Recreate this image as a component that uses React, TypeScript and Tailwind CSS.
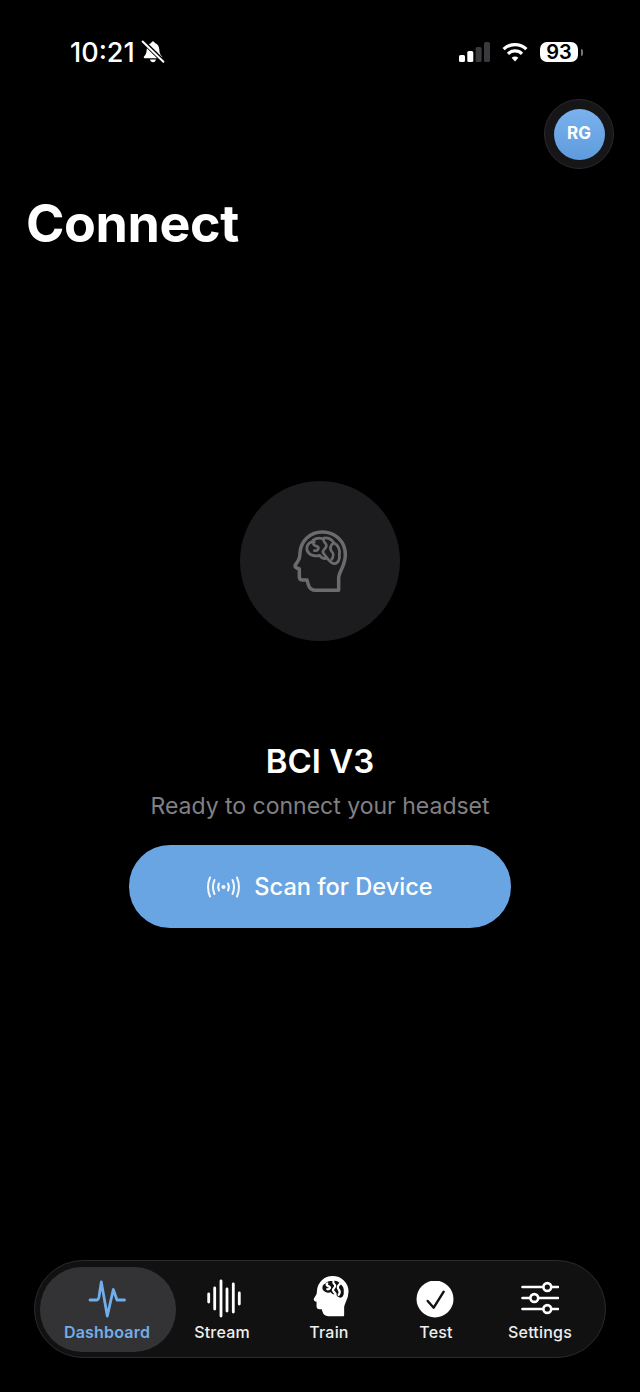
import React from "react";

const headPath =
  "M161 205 L161 168 C161 150 181 132 181 98 C181 58 150 30 112 30 C76 30 48 56 45 92 C44 104 45 108 40 115 L31 129 C29 133 31 137 35 138 L43 141 L43 164 C43 170 47 174 53 174 L66 174 L70 188 C73 198 82 205 92 205 Z";
const brainPath =
  "M66 85 C64 72 70 62 80 60 C86 50 100 46 112 50 C124 44 140 50 146 62 C158 68 166 82 163 98 C165 110 160 124 148 125 C138 124 132 116 126 108 C118 112 108 108 104 100 C92 104 74 102 66 85 Z";
const brainLines = [
  "M88 60 C80 66 90 72 98 74 C104 78 98 88 88 86",
  "M116 52 C112 62 126 62 124 72 C122 82 112 82 114 92 L126 108",
  "M146 62 C136 70 134 80 140 88 C146 94 146 104 140 112",
];

const HeadOutline = () => (
  <svg viewBox="0 0 210 234" className="h-[78px] w-[70px]" fill="none" stroke="#6b6b6d" strokeWidth="10.5" strokeLinejoin="round" strokeLinecap="round">
    <path d={headPath} />
    <path d={brainPath} strokeWidth="8.5" />
    {brainLines.map((d) => (
      <path key={d} d={d} strokeWidth="8" />
    ))}
  </svg>
);

const HeadFilled = () => (
  <svg viewBox="0 0 210 234" className="-mb-[3px] ml-[3px] h-[52px] w-[46px]" strokeLinejoin="round" strokeLinecap="round">
    <path d={headPath} fill="#fff" stroke="#fff" strokeWidth="8" />
    <path d={brainPath} fill="#111" />
    {brainLines.map((d) => (
      <path key={d} d={d} fill="none" stroke="#fff" strokeWidth="10" />
    ))}
  </svg>
);

const Pulse = () => (
  <svg width="38" height="38" viewBox="0 0 38 38" fill="none" stroke="#71aeea" strokeWidth="2.8" strokeLinejoin="round" strokeLinecap="round" className="overflow-visible">
    <path d="M2 19 H9 C10 19 10.5 18 11 16 L13.3 1 L19.3 35 L25.3 8.5 L29 19 H36.5" />
  </svg>
);

const Wave = () => (
  <svg width="38" height="38" viewBox="0 0 38 38" fill="none" stroke="#fff" strokeWidth="2.8" strokeLinecap="round" className="overflow-visible">
    <path d="M5.7 13 V21 M11.7 7 V28 M18 0 V35 M24 8 V30 M30.3 3 V31 M36.3 12 V23" />
  </svg>
);

const CheckCircle = () => (
  <svg width="38" height="38" viewBox="0 0 38 38" fill="none" className="-translate-x-[1px]">
    <circle cx="19" cy="18" r="18.5" fill="#fff" />
    <path d="M11.7 20 L17.7 26.7 L27.7 10.7" stroke="#111" strokeWidth="2.4" strokeLinecap="round" strokeLinejoin="round" />
  </svg>
);

const Sliders = () => (
  <svg width="38" height="38" viewBox="0 0 38 38" fill="none" stroke="#fff" strokeWidth="2.6" strokeLinecap="round">
    <path d="M1.5 6 H22 M30.5 6 H37 M1.5 17 H9 M17.5 17 H37 M1.5 28 H22 M30.5 28 H37" />
    <circle cx="26.3" cy="6" r="3.9" />
    <circle cx="13.3" cy="17" r="3.9" />
    <circle cx="26.3" cy="28" r="3.9" />
  </svg>
);

const Broadcast = () => (
  <svg width="33" height="24" viewBox="0 0 33 24" fill="none" stroke="#fff" strokeWidth="2" strokeLinecap="round" opacity="0.92">
    <circle cx="16.5" cy="12" r="2.1" fill="#fff" stroke="none" />
    <path d="M12 8.5 C11 10.5 11 13.5 12 15.5 M21 8.5 C22 10.5 22 13.5 21 15.5" />
    <path d="M7.5 5 C5.5 9.5 5.5 14.5 7.5 19 M25.5 5 C27.5 9.5 27.5 14.5 25.5 19" />
    <path d="M3 2.5 C0.5 8.5 0.5 15.5 3 21.5 M30 2.5 C32.5 8.5 32.5 15.5 30 21.5" />
  </svg>
);

const BellOff = () => (
  <svg width="24" height="24" viewBox="0 0 24 24" fill="#fff">
    <path d="M12 1.5 C13 1.5 13.7 2.2 13.8 3.1 C16.8 4 18.2 6.6 18.3 9.8 C18.4 13 19.4 15 21 16.6 C21.6 17.3 21.2 18.3 20.3 18.3 H3.7 C2.8 18.3 2.4 17.3 3 16.6 C4.6 15 5.6 13 5.7 9.8 C5.8 6.6 7.2 4 10.2 3.1 C10.3 2.2 11 1.5 12 1.5 Z" />
    <path d="M9 19.4 H15 C14.7 21 13.5 22.2 12 22.2 C10.5 22.2 9.3 21 9 19.4 Z" />
    <path d="M1 0.5 L23 22" stroke="#000" strokeWidth="4.4" fill="none" />
    <path d="M1.6 1.5 L22.4 21.8" stroke="#fff" strokeWidth="2" strokeLinecap="round" fill="none" />
  </svg>
);

const Signal = () => (
  <svg width="31" height="20" viewBox="0 0 31 20">
    <rect x="0" y="13" width="6" height="7" rx="1.6" fill="#fff" />
    <rect x="8.3" y="9" width="6" height="11" rx="1.6" fill="#fff" />
    <rect x="16.6" y="5" width="6" height="15" rx="1.6" fill="#3a3a3c" />
    <rect x="25" y="0" width="6" height="20" rx="1.6" fill="#3a3a3c" />
  </svg>
);

const Wifi = () => (
  <svg width="26" height="20" viewBox="0 0 26 20" fill="none" stroke="#fff" strokeWidth="3.2">
    <path d="M1.6 7.2 C8 1 18 1 24.4 7.2" />
    <path d="M6 11.8 C10 8 16 8 20 11.8" />
    <path d="M13 19.5 L9.6 15.8 C11.6 14.2 14.4 14.2 16.4 15.8 Z" fill="#fff" stroke="none" />
  </svg>
);

const tabs = [
  { label: "Stream", width: "w-[92px]", icon: <Wave /> },
  { label: "Train", width: "w-[122px]", icon: <HeadFilled /> },
  { label: "Test", width: "w-[92px]", icon: <CheckCircle /> },
  { label: "Settings", width: "w-[116px]", icon: <Sliders /> },
];

export default function App() {
  return (
    <div className="flex h-[1392px] w-[640px] flex-col bg-black text-white font-['Inter',sans-serif]">
      {/* status bar */}
      <div className="mt-[34px] flex h-[36px] items-center pl-[70px] pr-[57px]">
        <span className="text-[27px] font-medium leading-none">10:21</span>
        <span className="ml-[6px] flex"><BellOff /></span>
        <div className="ml-auto flex items-center">
          <Signal />
          <span className="ml-[12px] flex"><Wifi /></span>
          <span className="ml-[12px] flex h-[20px] w-[38px] items-center justify-center rounded-[7px] bg-white text-[20px] font-semibold leading-none text-black">93</span>
          <span className="ml-[3px] h-[7px] w-[2px] rounded-r-sm bg-[#777]" />
        </div>
      </div>

      {/* avatar */}
      <div className="mt-[29px] flex justify-end pr-[26px]">
        <div className="flex h-[70px] w-[70px] items-center justify-center rounded-full border border-[#2a2a2c] bg-[#161618]">
          <div className="flex h-[51px] w-[51px] items-center justify-center rounded-full bg-gradient-to-b from-[#79b2ee] to-[#5f9bdc] text-[17px] font-bold">RG</div>
        </div>
      </div>

      <h1 className="mt-[25px] pl-[26px] text-[52px] font-bold leading-[60px] tracking-[-0.4px]">Connect</h1>

      {/* connect section */}
      <div className="mt-[227px] flex flex-col items-center">
        <div className="flex h-[160px] w-[160px] items-center justify-center rounded-full bg-[#1c1c1e]">
          <HeadOutline />
        </div>
        <div className="mt-[100px] text-[33px] font-semibold leading-[40px]">BCI V3</div>
        <div className="mt-[11px] text-[23px] leading-[28px] text-[#808084]">Ready to connect your headset</div>
        <button className="mt-[25px] flex h-[83px] w-[382px] items-center justify-center gap-[14px] rounded-[41px] bg-[#6aa5e3] text-[23.6px] font-medium text-white">
          <Broadcast />
          Scan for Device
        </button>
      </div>

      {/* tab bar */}
      <div className="mx-[34px] mb-[34px] mt-auto flex h-[98px] items-center rounded-[49px] border border-[#2b2b2d] bg-[#111112] pl-[5px]">
        <div className="flex h-[85px] w-[136px] flex-col items-center justify-end rounded-[42px] bg-[#333335] pb-[10px] pr-[2px]">
          <Pulse />
          <span className="mt-[3px] text-[16px] font-semibold leading-[20px] tracking-[0.2px] text-[#71aeea]">Dashboard</span>
        </div>
        {tabs.map((tab) => (
          <div key={tab.label} className={`flex h-[85px] flex-col items-center justify-end pb-[10px] ${tab.width}`}>
            {tab.icon}
            <span className="mt-[3px] text-[16px] font-medium leading-[20px] tracking-[0.2px] text-[#eee]">{tab.label}</span>
          </div>
        ))}
      </div>
    </div>
  );
}
